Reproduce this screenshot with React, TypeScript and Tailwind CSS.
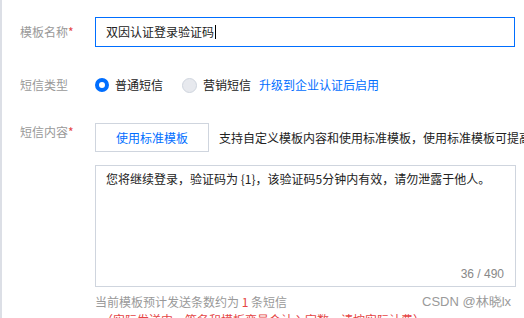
const Label = ({ text, required }: { text: string; required?: boolean }) => (
    <div className="w-[75px] shrink-0 text-[12px] leading-[18px] text-[#999]">
        {text}
        {required && <span className="text-[#e54545]">*</span>}
    </div>
)

export default function App() {
    return (
        <div
            className="relative h-[318px] w-[524px] overflow-hidden border-l-2 border-[#dcdfe6] bg-white pl-[18px]"
            style={{ fontFamily: '"Microsoft YaHei", "Noto Sans CJK SC", "Noto Sans", sans-serif' }}
        >
            <div className="flex items-center pt-[17px]">
                <Label text="模板名称" required />
                <div className="flex h-[30px] w-[420px] shrink-0 items-center border border-[#006eff] px-[10px] text-[12px] text-[#222]">
                    双因认证登录验证码<span className="ml-[1px] inline-block h-[14px] w-px bg-black" />
                </div>
            </div>

            <div className="mt-[23px] flex h-[30px] items-center">
                <Label text="短信类型" />
                <div className="flex items-center gap-[6px] text-[12px] text-[#222]">
                    <span className="h-[14px] w-[14px] rounded-full border-[4px] border-[#006eff] bg-white" />
                    <span>普通短信</span>
                </div>
                <div className="ml-[19px] flex items-center gap-[6px] text-[12px] text-[#222]">
                    <span className="h-[15px] w-[15px] rounded-full border border-[#cfd5de] bg-[#e7e9ee]" />
                    <span>营销短信</span>
                </div>
                <span className="ml-[8px] whitespace-nowrap text-[12px] text-[#006eff]">升级到企业认证后启用</span>
            </div>

            <div className="mt-[23px] flex items-start">
                <Label text="短信内容" required />
                <div className="flex flex-col">
                    <div className="flex items-center">
                        <button className="flex h-[29px] w-[114px] shrink-0 items-center justify-center border border-[#cfd5de] bg-white text-[12px] text-[#006eff]">
                            使用标准模板
                        </button>
                        <span className="ml-[10px] whitespace-nowrap text-[12px] text-[#222]">
                            支持自定义模板内容和使用标准模板，使用标准模板可提高审核效率
                        </span>
                    </div>
                    <div className="relative mt-[13px] h-[122px] w-[421px] border border-[#cfd5de] px-[10px] pt-[4px] text-[12px] leading-[18px] text-[#222]">
                        您将继续登录，验证码为 {'{1}'}，该验证码5分钟内有效，请勿泄露于他人。
                        <span
                            className="absolute bottom-[3px] right-[11px] text-[12px] text-[#888]"
                            style={{ fontFamily: '"Liberation Sans", Arial, sans-serif' }}
                        >
                            36 / 490
                        </span>
                    </div>
                    <div className="mt-[6px] whitespace-nowrap text-[12px] leading-[18px] text-[#999]">
                        当前模板预计发送条数约为 <span className="text-[#e54545]">1</span> 条短信
                    </div>
                    <div className="whitespace-nowrap pl-[6px] text-[12px] leading-[18px] text-[#e54545]">
                        （实际发送中，签名和模板变量会计入字数，请按实际计费）
                    </div>
                </div>
            </div>

            <span
                className="absolute left-[420px] top-[293px] text-[13px] leading-[18px] text-[#9a9a9a]"
                style={{ fontFamily: '"Liberation Sans", Arial, sans-serif' }}
            >
                CSDN @林晓lx
            </span>
        </div>
    )
}
